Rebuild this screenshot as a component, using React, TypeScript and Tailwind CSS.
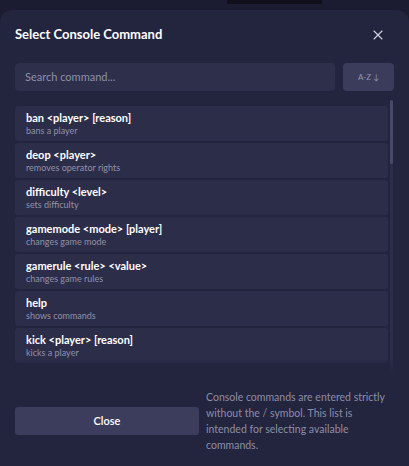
import { X } from "lucide-react";

const COMMANDS = [
  { cmd: "ban <player> [reason]", desc: "bans a player" },
  { cmd: "deop <player>", desc: "removes operator rights" },
  { cmd: "difficulty <level>", desc: "sets difficulty" },
  { cmd: "gamemode <mode> [player]", desc: "changes game mode" },
  { cmd: "gamerule <rule> <value>", desc: "changes game rules" },
  { cmd: "help", desc: "shows commands" },
  { cmd: "kick <player> [reason]", desc: "kicks a player" },
];

export default function App() {
  return (
    <div
      className="relative h-[466px] w-[409px] overflow-hidden bg-[#1b1c31]"
      style={{ fontFamily: "Lato, 'Noto Sans', sans-serif" }}
    >
      <div className="absolute left-[227px] top-0 h-[4px] w-[95px] bg-[#0f1019]" />
      <div className="mt-[10px] flex h-[470px] flex-col rounded-xl bg-[#23243e] px-[15px]">
        <div className="flex h-[48px] items-center justify-between pt-[2px]">
          <h2 className="text-[13px] font-bold text-white">Select Console Command</h2>
          <X className="mr-[8px] h-[16px] w-[16px] text-[#d4d5e2]" strokeWidth={1.6} />
        </div>

        <div className="mt-[5px] flex gap-[8px]">
          <div className="flex h-[28px] flex-1 items-center rounded-[4px] bg-[#2e2f4b] px-[10px] text-[11px] text-[#8f90a8]">
            Search command...
          </div>
          <div className="flex h-[28px] w-[51px] items-center justify-center rounded-[4px] bg-[#3b3c5b] text-[8px] text-[#9596b0]">
            A-Z ↓
          </div>
        </div>

        <div className="relative mt-[9px] flex h-[276px] gap-[2px] overflow-hidden">
          <div className="flex flex-1 flex-col gap-[2px] pt-[6px]">
            {COMMANDS.map((c) => (
              <div key={c.cmd} className="flex h-[35px] shrink-0 flex-col justify-center rounded-[3px] bg-[#2c2d49] px-[11px]">
                <div className="text-[11px] font-bold leading-[14px] text-white">{c.cmd}</div>
                <div className="text-[9px] leading-[12px] text-[#9091a9]">{c.desc}</div>
              </div>
            ))}
          </div>
          <div className="mr-[1px] w-[3px] rounded-full bg-[#2c2d48]">
            <div className="h-[64px] rounded-full bg-[#47486a]" />
          </div>
          <div className="pointer-events-none absolute bottom-0 left-0 right-0 h-[16px] bg-gradient-to-b from-[#23243e]/40 to-[#23243e]" />
        </div>

        <div className="mt-[13px] flex items-center gap-[7px]">
          <button className="flex h-[28px] w-[186px] items-center justify-center rounded-[3px] bg-[#3c3d5c] text-[11px] font-semibold text-white">
            Close
          </button>
          <p className="w-[190px] text-[10.5px] leading-[16px] text-[#8c8da6]">
            Console commands are entered strictly
            <br />
            without the / symbol. This list is
            <br />
            intended for selecting available
            <br />
            commands.
          </p>
        </div>
      </div>
    </div>
  );
}
